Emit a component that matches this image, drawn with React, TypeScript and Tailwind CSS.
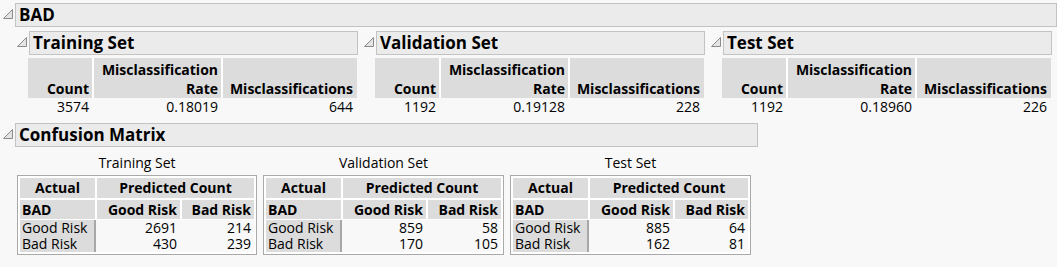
import React from 'react';

type RateRow = { title: string; count: string; rate: string; miss: string };
type MatrixRow = { title: string; good: [string, string]; bad: [string, string] };

const rates: RateRow[] = [
  { title: 'Training Set', count: '3574', rate: '0.18019', miss: '644' },
  { title: 'Validation Set', count: '1192', rate: '0.19128', miss: '228' },
  { title: 'Test Set', count: '1192', rate: '0.18960', miss: '226' },
];

const matrices: MatrixRow[] = [
  { title: 'Training Set', good: ['2691', '214'], bad: ['430', '239'] },
  { title: 'Validation Set', good: ['859', '58'], bad: ['170', '105'] },
  { title: 'Test Set', good: ['885', '64'], bad: ['162', '81'] },
];

// little open/close triangle in front of every outline title
function Disclosure() {
  return (
    <svg width="10" height="10" viewBox="0 0 10 10" className="shrink-0">
      <polygon points="0.5,9.5 9.5,0.5 9.5,9.5" fill="#e4e4e4" stroke="#8a8a8a" strokeWidth="1" />
    </svg>
  );
}

function OutlineTitle({ title, width }: { title: string; width: string }) {
  return (
    <div className="flex items-start">
      <div className="pt-[6px] pr-[2px]">
        <Disclosure />
      </div>
      <div
        className={`${width} h-[24px] border border-[#c3c3c3] bg-[#ebebeb] pl-[3px] text-[17px] font-bold leading-[22px] text-black`}
      >
        {title}
      </div>
    </div>
  );
}

function RateTable({ row }: { row: RateRow }) {
  return (
    <div className="ml-[11px] mt-[3px] w-[329px] text-[14px]">
      <div className="flex gap-[2px] bg-white font-bold leading-[19px]">
        <div className="flex h-[40px] w-[64px] items-end justify-end bg-[#dcdcdc] pr-[3px]">Count</div>
        <div className="flex h-[40px] w-[127px] flex-col items-end justify-end bg-[#dcdcdc] pr-[3px]">
          <span>Misclassification</span>
          <span>Rate</span>
        </div>
        <div className="flex h-[40px] flex-1 items-end justify-end bg-[#dcdcdc] pr-[4px]">Misclassifications</div>
      </div>
      <div className="flex gap-[2px] leading-[17px]">
        <div className="w-[64px] pr-[3px] text-right">{row.count}</div>
        <div className="w-[127px] pr-[3px] text-right">{row.rate}</div>
        <div className="flex-1 pr-[4px] text-right">{row.miss}</div>
      </div>
    </div>
  );
}

function MatrixTable({ m, width }: { m: MatrixRow; width: string }) {
  return (
    <div className={`${width} flex flex-col items-center`}>
      <div className="h-[18px] text-[14px] leading-[18px]">{m.title}</div>
      <div className="mt-[3px] w-full border border-[#a9a9a9] bg-white p-[2px] text-[14px]">
        <div className="flex gap-[2px] font-bold leading-[20px]">
          <div className="w-[75px] bg-[#dcdcdc] text-center">Actual</div>
          <div className="flex-1 bg-[#dcdcdc] text-center">Predicted Count</div>
        </div>
        <div className="mt-[2px] flex gap-[2px] font-bold leading-[19px]">
          <div className="w-[75px] bg-[#dcdcdc] pl-[2px]">BAD</div>
          <div className="w-[83px] bg-[#dcdcdc] pr-[3px] text-right">Good Risk</div>
          <div className="flex-1 bg-[#dcdcdc] pr-[3px] text-right">Bad Risk</div>
        </div>
        <div className="mt-[1px] flex bg-[#f8f8f8] leading-[16px]">
          <div className="w-[76px] border-r-2 border-[#a8a8a8] bg-[#dcdcdc] pl-[2px]">
            <div>Good Risk</div>
            <div>Bad Risk</div>
          </div>
          <div className="ml-[1px] w-[83px] pr-[3px] text-right">
            <div>{m.good[0]}</div>
            <div>{m.bad[0]}</div>
          </div>
          <div className="ml-[2px] flex-1 pr-[3px] text-right">
            <div>{m.good[1]}</div>
            <div>{m.bad[1]}</div>
          </div>
        </div>
      </div>
    </div>
  );
}

export default function App() {
  return (
    <div
      className="h-[267px] w-[1057px] overflow-hidden bg-[#f8f8f8] pl-[3px] pt-[3px] text-black"
      style={{ fontFamily: '"Open Sans", sans-serif' }}
    >
      <OutlineTitle title="BAD" width="w-[1042px]" />
      <div className="flex gap-[6px] pl-[14px] pt-[4px]">
        {rates.map((r) => (
          <div key={r.title} className="w-[341px]">
            <OutlineTitle title={r.title} width="w-[329px]" />
            <RateTable row={r} />
          </div>
        ))}
      </div>
      <div className="mt-[8px]">
        <OutlineTitle title="Confusion Matrix" width="w-[743px]" />
      </div>
      <div className="flex gap-[6px] pl-[14px] pt-[7px]">
        <MatrixTable m={matrices[0]} width="w-[240px]" />
        <MatrixTable m={matrices[1]} width="w-[241px]" />
        <MatrixTable m={matrices[2]} width="w-[241px]" />
      </div>
    </div>
  );
}
